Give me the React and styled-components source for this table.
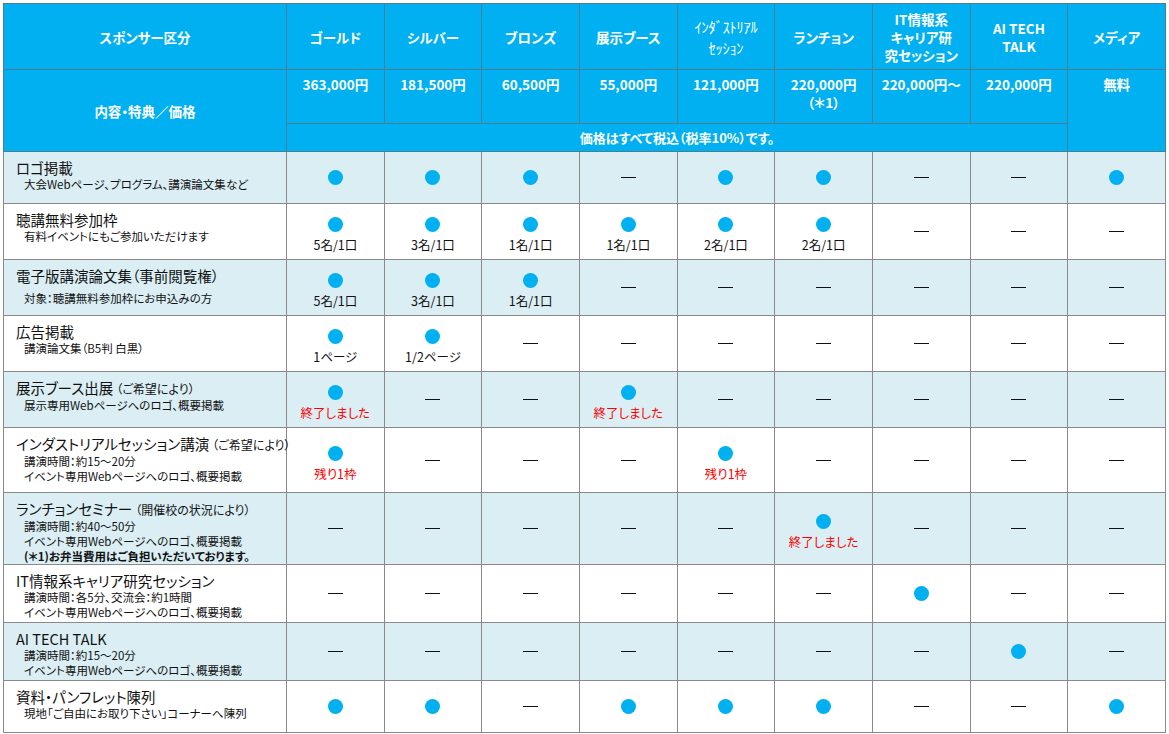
import React from 'react'
import styled, { createGlobalStyle } from 'styled-components'

const GlobalStyle = createGlobalStyle`
    body {
        margin: 0;
        background: #fff;
        font-family: "Noto Sans CJK JP", "Noto Sans", sans-serif;
        font-feature-settings: "palt";
    }
`

const Page = styled.div`
    padding: 3px;
`

const Table = styled.table`
    width: 1163px;
    table-layout: fixed;
    border-collapse: collapse;
    border: 1px solid #8a8a8a;
`

const HeadCell = styled.th`
    background: #00b0f0;
    color: #fff;
    font-weight: 700;
    font-size: ${p => p.$small ? '13px' : '13.5px'};
    line-height: 18px;
    text-align: center;
    vertical-align: ${p => p.$top ? 'top' : 'middle'};
    padding: ${p => p.$top ? '5px 2px 0' : '0 2px'};
    border: 1px solid #4a7f93;
    white-space: nowrap;
`

const HalfKana = styled.span`
    display: inline-block;
    font-weight: 400;
    font-size: 14.5px;
    line-height: 21px;
    letter-spacing: -0.3px;
    font-feature-settings: normal;
`

const Row = styled.tr`
    height: ${p => p.$h}px;
    background: ${p => p.$shade ? '#daeef3' : '#fff'};
`

const LabelCell = styled.td`
    vertical-align: top;
    padding: 6px 4px 0 12px;
    border: 1px solid #8a8a8a;
    color: #111;
`

const Title = styled.div`
    font-size: 14.5px;
    line-height: 19px;
    white-space: nowrap;
`

const Aside = styled.span`
    font-size: 12px;
    margin-left: 3px;
`

const Sub = styled.div`
    margin-left: 8px;
    margin-top: ${p => p.$gap ? '6px' : '0'};
    font-size: 11.5px;
    line-height: 15px;
    font-weight: ${p => p.$bold ? 700 : 400};
    white-space: nowrap;
`

const MarkCell = styled.td`
    border: 1px solid #8a8a8a;
    padding: 0;
    vertical-align: middle;
`

const MarkBox = styled.div`
    display: flex;
    flex-direction: column;
    align-items: center;
    gap: 5px;
    padding-top: ${p => p.$note ? '6px' : '0'};
`

const Dot = styled.span`
    width: 15px;
    height: 15px;
    border-radius: 50%;
    background: #00b0f0;
`

const Dash = styled.span`
    display: block;
    width: 15px;
    height: 1px;
    background: #111;
`

const Note = styled.span`
    font-size: 12.5px;
    line-height: 15px;
    color: ${p => p.$red ? '#ff0000' : '#111'};
    white-space: nowrap;
`

const columns = [
    { name: 'ゴールド', price: ['363,000円'] },
    { name: 'シルバー', price: ['181,500円'] },
    { name: 'ブロンズ', price: ['60,500円'] },
    { name: '展示ブース', price: ['55,000円'] },
    { name: 'industrial', price: ['121,000円'] },
    { name: 'ランチョン', price: ['220,000円', '（＊1）'] },
    { name: ['IT情報系', 'キャリア研', '究セッション'], price: ['220,000円～'] },
    { name: ['AI TECH', 'TALK'], price: ['220,000円'] },
]

const D = null
const O = { dot: true }
const n = (text) => ({ dot: true, text })
const r = (text) => ({ dot: true, text, red: true })

const rows = [
    {
        h: 52, title: 'ロゴ掲載', subs: ['大会Webページ、プログラム、講演論文集など'],
        marks: [O, O, O, D, O, O, D, D, O],
    },
    {
        h: 56, title: '聴講無料参加枠', subs: ['有料イベントにもご参加いただけます'],
        marks: [n('5名/1口'), n('3名/1口'), n('1名/1口'), n('1名/1口'), n('2名/1口'), n('2名/1口'), D, D, D],
    },
    {
        h: 56, title: '電子版講演論文集（事前閲覧権）', subs: ['対象：聴講無料参加枠にお申込みの方'], gap: true,
        marks: [n('5名/1口'), n('3名/1口'), n('1名/1口'), D, D, D, D, D, D],
    },
    {
        h: 56, title: '広告掲載', subs: ['講演論文集（B5判 白黒）'],
        marks: [n('1ページ'), n('1/2ページ'), D, D, D, D, D, D, D],
    },
    {
        h: 56, title: '展示ブース出展', aside: '（ご希望により）', subs: ['展示専用Webページへのロゴ、概要掲載'],
        marks: [r('終了しました'), D, D, r('終了しました'), D, D, D, D, D],
    },
    {
        h: 65, title: 'インダストリアルセッション講演', aside: '（ご希望により）',
        subs: ['講演時間：約15～20分', 'イベント専用Webページへのロゴ、概要掲載'],
        marks: [r('残り1枠'), D, D, D, r('残り1枠'), D, D, D, D],
    },
    {
        h: 72, title: 'ランチョンセミナー', aside: '（開催校の状況により）',
        subs: ['講演時間：約40～50分', 'イベント専用Webページへのロゴ、概要掲載'],
        bold: '(＊1)お弁当費用はご負担いただいております。',
        marks: [D, D, D, D, D, r('終了しました'), D, D, D],
    },
    {
        h: 58, title: 'IT情報系キャリア研究セッション',
        subs: ['講演時間：各5分、交流会：約1時間', 'イベント専用Webページへのロゴ、概要掲載'],
        marks: [D, D, D, D, D, D, O, D, D],
    },
    {
        h: 58, title: 'AI TECH TALK',
        subs: ['講演時間：約15～20分', 'イベント専用Webページへのロゴ、概要掲載'],
        marks: [D, D, D, D, D, D, D, O, D],
    },
    {
        h: 52, title: '資料・パンフレット陳列', subs: ['現地「ご自由にお取り下さい」コーナーへ陳列'],
        marks: [O, O, D, O, O, O, D, D, O],
    },
]

function ColumnName({ name }) {
    if (name === 'industrial') {
        return <HalfKana>ｲﾝﾀﾞｽﾄﾘｱﾙ<br />ｾｯｼｮﾝ</HalfKana>
    }
    if (Array.isArray(name)) {
        return name.map((line, i) => <React.Fragment key={i}>{i > 0 && <br />}{line}</React.Fragment>)
    }
    return name
}

function Mark({ mark }) {
    if (!mark) return <MarkBox><Dash /></MarkBox>
    return (
        <MarkBox $note={!!mark.text}>
            <Dot />
            {mark.text && <Note $red={mark.red}>{mark.text}</Note>}
        </MarkBox>
    )
}

function App() {
    return (
        <Page>
            <GlobalStyle />
            <Table>
                <colgroup>
                    <col style={{ width: 283 }} />
                    {Array.from({ length: 9 }).map((_, i) => <col key={i} />)}
                </colgroup>
                <thead>
                    <tr style={{ height: 66 }}>
                        <HeadCell>スポンサー区分</HeadCell>
                        {columns.map((c, i) => (
                            <HeadCell key={i}><ColumnName name={c.name} /></HeadCell>
                        ))}
                        <HeadCell>メディア</HeadCell>
                    </tr>
                    <tr style={{ height: 54 }}>
                        <HeadCell rowSpan={2}>内容・特典／価格</HeadCell>
                        {columns.map((c, i) => (
                            <HeadCell key={i} $top>
                                {c.price.map((line, j) => <div key={j}>{line}</div>)}
                            </HeadCell>
                        ))}
                        <HeadCell rowSpan={2} $top>無料</HeadCell>
                    </tr>
                    <tr style={{ height: 28 }}>
                        <HeadCell colSpan={8} $small>価格はすべて税込（税率10%）です。</HeadCell>
                    </tr>
                </thead>
                <tbody>
                    {rows.map((row, i) => (
                        <Row key={i} $h={row.h} $shade={i % 2 === 0}>
                            <LabelCell>
                                <Title>{row.title}{row.aside && <Aside>{row.aside}</Aside>}</Title>
                                {row.subs.map((s, j) => <Sub key={j} $gap={row.gap}>{s}</Sub>)}
                                {row.bold && <Sub $bold>{row.bold}</Sub>}
                            </LabelCell>
                            {row.marks.map((m, j) => (
                                <MarkCell key={j}><Mark mark={m} /></MarkCell>
                            ))}
                        </Row>
                    ))}
                </tbody>
            </Table>
        </Page>
    )
}

export default App
